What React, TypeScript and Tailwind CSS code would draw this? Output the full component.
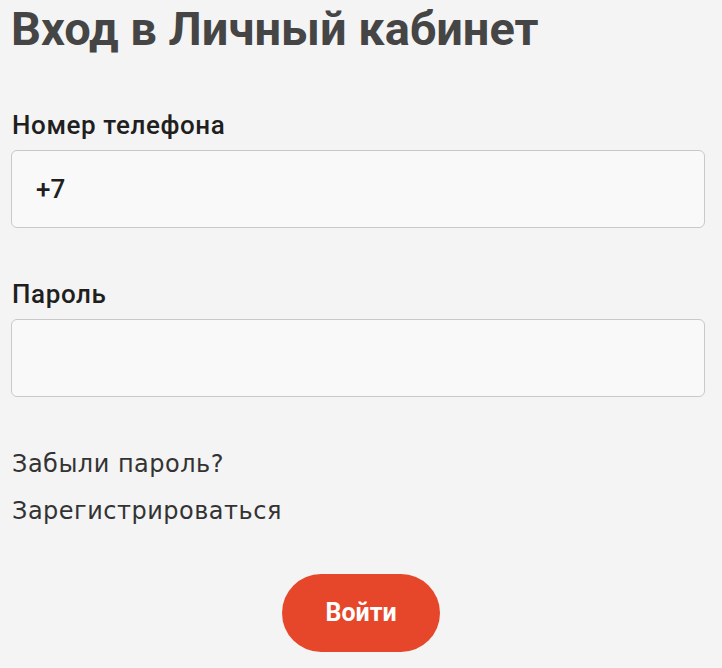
const Field = ({ label, value, mt }: { label: string; value?: string; mt: string }) => {
  return (
    <div className={mt}>
      <label className="block text-[26px] leading-[30px] font-medium tracking-[0.6px] text-[#1f1f1f] pl-[1px]">{label}</label>
      <div className="mt-[10px] h-[78px] w-[694px] rounded-[6px] border border-[#c9c9c9] bg-[#f9f9f9] flex items-center pl-[24px] text-[26px] font-medium text-[#1f1f1f]">
        {value}
      </div>
    </div>
  );
};

export default function App() {
  return (
    <div
      className="w-[722px] h-[668px] bg-[#f4f4f4] px-[11px] pt-[1px]"
      style={{ fontFamily: 'Roboto, "Liberation Sans", sans-serif' }}
    >
      <h1 className="text-[47px] leading-[56px] font-bold text-[#454545]">Вход в Личный кабинет</h1>

      <Field label="Номер телефона" value="+7" mt="mt-[53px]" />
      <Field label="Пароль" mt="mt-[51px]" />

      <div
        className="mt-[52px] flex flex-col gap-[17px] text-[24px] leading-[30px] tracking-[0.5px] text-[#333] pl-[1px]"
        style={{ fontFamily: '"DejaVu Sans", sans-serif' }}
      >
        <a>Забыли пароль?</a>
        <a>Зарегистрироваться</a>
      </div>

      <div className="mt-[48px] flex justify-center">
        <button className="w-[158px] h-[78px] rounded-full bg-[#e6472a] text-white text-[25px] font-bold">Войти</button>
      </div>
    </div>
  );
}
